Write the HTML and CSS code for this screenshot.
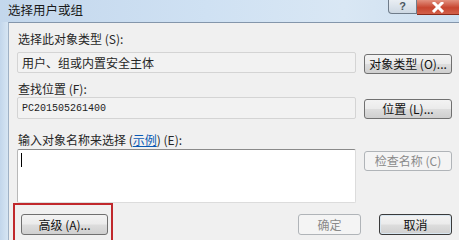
FILE: index.html
```html
<!DOCTYPE html>
<html lang="zh-CN">
<head>
<meta charset="utf-8">
<title>选择用户或组</title>
<link rel="stylesheet" href="styles.css">
</head>
<body>
<div class="window">
  <div class="titlebar">
    <div class="title">选择用户或组</div>
    <div class="caption">
      <div class="cap-btn help">?</div>
      <div class="cap-btn close">
        <svg width="14" height="11" viewBox="0 0 14 11"><path d="M2 0 L12 10 M12 0 L2 10" stroke="#ffffff" stroke-width="3" fill="none"/></svg>
      </div>
    </div>
  </div>
  <div class="body">
    <div class="frame-left"></div>
    <div class="client">
      <div class="label l1">选择此对象类型 (S):</div>
      <div class="row r1">
        <div class="field ro">用户、组或内置安全主体</div>
        <div class="btn">对象类型 (O)...</div>
      </div>
      <div class="label l2">查找位置 (F):</div>
      <div class="row r2">
        <div class="field ro mono">PC201505261400</div>
        <div class="btn">位置 (L)...</div>
      </div>
      <div class="label l3">输入对象名称来选择 (<span class="link">示例</span>) (E):</div>
      <div class="row r3">
        <div class="field area"><span class="caret"></span></div>
        <div class="btn disabled">检查名称 (C)</div>
      </div>
      <div class="row r4">
        <div class="btn adv">高级 (A)...</div>
        <div class="spacer"></div>
        <div class="btn disabled ok">确定</div>
        <div class="btn def">取消</div>
      </div>
      <div class="highlight"></div>
    </div>
  </div>
</div>
</body>
</html>
```

FILE: styles.css
```css
html, body {
  margin: 0;
  padding: 0;
}
body {
  width: 459px;
  height: 240px;
  overflow: hidden;
  font-family: "Noto Sans CJK SC", "Liberation Sans", sans-serif;
  font-size: 12px;
  color: #262626;
  background: #c8dbee;
}
.window {
  display: flex;
  flex-direction: column;
  height: 240px;
}
.titlebar {
  height: 22px;
  display: flex;
  justify-content: space-between;
  align-items: flex-start;
  background: linear-gradient(to right, #c3d7ec 0%, #cfe1f3 45%, #d9e7f4 75%, #cddff0 100%);
}
.title {
  padding: 2px 0 0 8px;
  line-height: 16px;
  font-size: 12.5px;
  color: #1a1a1a;
}
.caption {
  display: flex;
}
.cap-btn {
  height: 13px;
  display: flex;
  align-items: center;
  justify-content: center;
}
.help {
  width: 27px;
  border: 1px solid #6f7c8a;
  border-top: none;
  border-radius: 0 0 0 4px;
  background: linear-gradient(#e9eef3, #cdd8e3);
  color: #4b5660;
  font-family: "Liberation Sans", sans-serif;
  font-weight: bold;
  font-size: 11px;
  line-height: 13px;
}
.close {
  width: 42px;
  height: 14px;
  border-bottom: 1px solid #8a2a1a;
  background: linear-gradient(#e2917f, #c74630 55%, #d2604a);
}
.body {
  flex: 1;
  display: flex;
}
.frame-left {
  width: 8px;
  background: linear-gradient(to right, #c2d6eb, #d6e5f3);
}
.client {
  position: relative;
  flex: 1;
  background: #f0f0f0;
  border-top: 1px solid #8496ab;
  border-left: 1px solid #9fb1c5;
  padding: 8px 7px 0 8px;
}
.label {
  line-height: 15px;
  padding-left: 1px;
}
.l2 { margin-top: 7px; }
.l3 { margin-top: 13px; }
.link {
  color: #0a5ab4;
  text-decoration: underline;
}
.row {
  display: flex;
  align-items: flex-start;
  gap: 8px;
}
.r1 { margin-top: 6px; }
.r2 { margin-top: 1px; }
.r3 { margin-top: 2px; }
.r4 { margin-top: 11px; }
.field {
  width: 339px;
  box-sizing: border-box;
  border: 1px solid #d4d4d4;
  border-radius: 2px;
  background: #f2f2f2;
  padding-left: 4px;
  display: flex;
  align-items: center;
}
.r1 .field { height: 21px; }
.r2 .field { height: 22px; }
.mono {
  font-family: "Liberation Mono", monospace;
  font-size: 10px;
  color: #222;
}
.area {
  height: 54px;
  background: #ffffff;
  border-top: 1px solid #8a8a8a;
  border-left: 1px solid #b8b8b8;
  border-right: 1px solid #dcdcdc;
  border-bottom: 1px solid #dcdcdc;
  align-items: flex-start;
  padding-top: 3px;
  padding-left: 3px;
}
.caret {
  width: 1px;
  height: 14px;
  background: #000;
}
.btn {
  width: 88px;
  height: 20px;
  margin-top: 2px;
  box-sizing: border-box;
  border: 1px solid #707070;
  border-radius: 3px;
  background: linear-gradient(#f3f3f3 0%, #ebebeb 48%, #dddddd 52%, #cfcfcf 100%);
  display: flex;
  align-items: center;
  justify-content: center;
  white-space: nowrap;
  font-size: 12px;
  color: #111;
  line-height: 18px;
}
.btn.disabled {
  border-color: #b0b4b8;
  background: #f4f4f4;
  color: #8a8a8a;
}
.r4 .btn {
  margin-top: 0;
  height: 21px;
}
.adv {
  margin-left: 4px;
  width: 87px;
}
.spacer { flex: 1; }
.ok {
  width: 63px;
  margin-right: 10px;
}
.def {
  width: 73px;
  border-color: #3a3a3a;
  box-shadow: inset 0 0 0 1px #d8e6f0;
}
.highlight {
  position: absolute;
  left: 4px;
  top: 180px;
  width: 96px;
  height: 40px;
  border: 2px solid #c0282c;
}
```
